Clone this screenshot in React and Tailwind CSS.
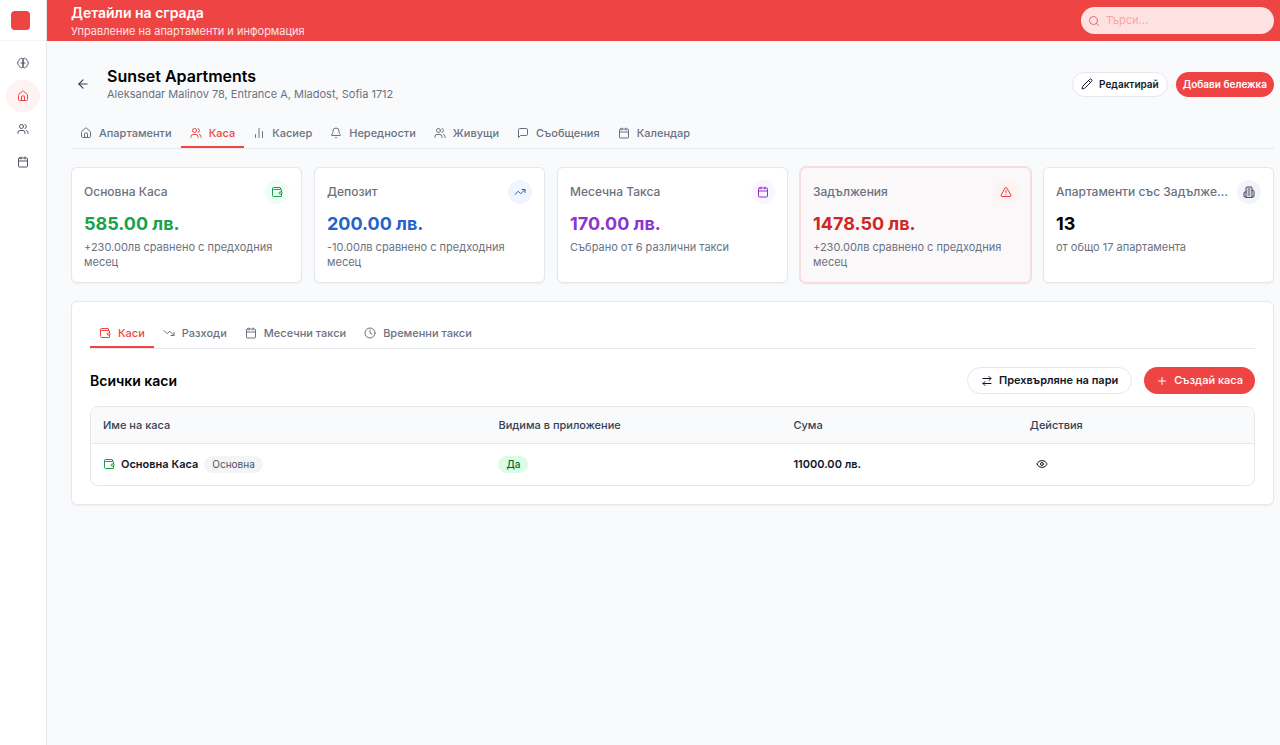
import { useState } from 'react';
import {
  ArrowLeft,
  ArrowRightLeft,
  Bell,
  Calendar,
  ChartNoAxesColumn,
  Clock,
  Eye,
  House,
  Pencil,
  Plus,
  Search,
  TrendingDown,
  TrendingUp,
  TriangleAlert,
  Users,
  Wallet,
} from 'lucide-react';

const LineIcon = ({ className, children }) => (
  <svg viewBox="0 0 24 24" fill="none" stroke="currentColor" strokeWidth="2" strokeLinecap="round" strokeLinejoin="round" className={className} aria-hidden="true">
    {children}
  </svg>
);

const Brain = ({ className }) => (
  <LineIcon className={className}>
    <path d="M12 4.5A2.8 2.8 0 0 0 7 3.4C4.800 4 3.600 5.600 3.700 7.500A5.500 5.500 0 0 0 1.500 12a5.500 5.500 0 0 0 2.200 4.500c-.1 1.900 1.100 3.500 3.300 4.100a2.800 2.800 0 0 0 5-1.100Z" />
    <path d="M12 4.500a2.800 2.800 0 0 1 5-1.100c2.200.6 3.400 2.200 3.300 4.100A5.500 5.500 0 0 1 22.500 12a5.500 5.500 0 0 1-2.200 4.500c.1 1.900-1.100 3.500-3.300 4.100a2.800 2.800 0 0 1-5-1.100Z" />
    <path d="M8 12h8" />
  </LineIcon>
);

const Message = ({ className }) => (
  <LineIcon className={className}>
    <path d="M21 15a2 2 0 0 1-2 2H7l-4 4V5a2 2 0 0 1 2-2h14a2 2 0 0 1 2 2z" />
  </LineIcon>
);

const Building = ({ className }) => (
  <LineIcon className={className}>
    <path d="M6 22V4a2 2 0 0 1 2-2h8a2 2 0 0 1 2 2v18Z" />
    <path d="M6 12H4a2 2 0 0 0-2 2v6a2 2 0 0 0 2 2h2" />
    <path d="M18 9h2a2 2 0 0 1 2 2v9a2 2 0 0 1-2 2h-2" />
    <path d="M10 6h4M10 10h4M10 14h4M10 18h4" />
  </LineIcon>
);

const navItems = [
  { icon: Brain, label: 'Асистент' },
  { icon: House, label: 'Сгради', active: true },
  { icon: Users, label: 'Потребители' },
  { icon: Calendar, label: 'Календар' },
];

const mainTabs = [
  { icon: House, label: 'Апартаменти' },
  { icon: Users, label: 'Каса' },
  { icon: ChartNoAxesColumn, label: 'Касиер' },
  { icon: Bell, label: 'Нередности' },
  { icon: Users, label: 'Живущи' },
  { icon: Message, label: 'Съобщения' },
  { icon: Calendar, label: 'Календар' },
];

const cashTabs = [
  { icon: Wallet, label: 'Каси' },
  { icon: TrendingDown, label: 'Разходи' },
  { icon: Calendar, label: 'Месечни такси' },
  { icon: Clock, label: 'Временни такси' },
];

const stats = [
  { title: 'Основна Каса', value: '585.00 лв.', note: '+230.00лв сравнено с предходния месец', icon: Wallet, valueColor: 'text-[#16a34a]', iconColor: 'text-[#16a34a] bg-green-50' },
  { title: 'Депозит', value: '200.00 лв.', note: '-10.00лв сравнено с предходния месец', icon: TrendingUp, valueColor: 'text-[#2563cb]', iconColor: 'text-[#2563cb] bg-blue-50' },
  { title: 'Месечна Такса', value: '170.00 лв.', note: 'Събрано от 6 различни такси', icon: Calendar, valueColor: 'text-[#8b35cf]', iconColor: 'text-[#8b35cf] bg-purple-50' },
  { title: 'Задължения', value: '1478.50 лв.', note: '+230.00лв сравнено с предходния месец', icon: TriangleAlert, valueColor: 'text-[#d02626]', iconColor: 'text-[#dc4040] bg-red-50', warning: true },
  { title: 'Апартаменти със Задължения', value: '13', note: 'от общо 17 апартамента', icon: Building, valueColor: 'text-black', iconColor: 'text-gray-700 bg-[#f3f3fa]' },
];

const Tabs = ({ items, initial }) => {
  const [active, setActive] = useState(initial);
  return (
    <div role="tablist" className="flex border-b border-gray-200">
      {items.map(({ icon: Icon, label }) => (
        <button
          key={label}
          role="tab"
          aria-selected={active === label}
          onClick={() => setActive(label)}
          className={`flex h-7 items-center gap-[7px] border-b-2 px-[9px] text-[11px] font-medium whitespace-nowrap ${
            active === label ? 'border-[#ef4444] text-[#ef4444]' : 'border-transparent text-gray-500'
          }`}
        >
          <Icon className="size-3 shrink-0" />
          {label}
        </button>
      ))}
    </div>
  );
};

const StatCard = ({ title, value, note, icon: Icon, valueColor, iconColor, warning }) => (
  <div className={`min-w-0 rounded-md border p-3 shadow-xs ${warning ? 'border-[#f8dcdf] bg-[#faf8f9] ring-1 ring-[#f8dcdf]' : 'border-gray-200 bg-white'}`}>
    <div className="flex items-center justify-between gap-1">
      <h3 className="truncate text-[12px] font-medium text-gray-500">{title}</h3>
      <span className={`flex size-6 shrink-0 items-center justify-center rounded-full ${iconColor}`}>
        <Icon className="size-3" />
      </span>
    </div>
    <p className={`mt-2 text-[18px] leading-6 font-bold ${valueColor}`}>{value}</p>
    <p className="mt-1 text-[11px] leading-[15px] text-gray-500">{note}</p>
  </div>
);

const App = () => (
  <div className="flex min-h-screen bg-[#f9fafc] font-['Inter','Noto_Sans',sans-serif] text-gray-900">
    <aside className="w-[47px] shrink-0 border-r border-gray-200 bg-white">
      <div className="flex h-[41px] items-center border-b border-gray-100 pl-[11px]">
        <span className="size-[19px] rounded bg-[#ef4444]" />
      </div>
      <nav className="flex flex-col items-center gap-px pt-1.5">
        {navItems.map(({ icon: Icon, label, active }) => (
          <a
            key={label}
            href="#"
            aria-label={label}
            className={`flex h-8 w-[34px] items-center justify-center rounded-full ${active ? 'bg-red-50 text-[#ef4444]' : 'text-gray-600'}`}
          >
            <Icon className="size-3" />
          </a>
        ))}
      </nav>
    </aside>

    <div className="min-w-0 flex-1">
      <header className="flex h-[41px] items-center justify-between bg-[#ef4444] pr-1.5 pl-6 text-white">
        <div>
          <h1 className="text-[14px] leading-5 font-semibold">Детайли на сграда</h1>
          <p className="text-[11px] leading-4 text-red-100">Управление на апартаменти и информация</p>
        </div>
        <label className="flex h-[27px] w-[193px] items-center gap-1.5 rounded-full bg-[#fee2e2] px-[7px]">
          <Search className="size-3 shrink-0 text-[#dc6b6b]" />
          <input type="search" aria-label="Търсене" placeholder="Търси..." className="min-w-0 flex-1 bg-transparent text-[11px] text-red-900 outline-none placeholder:text-[#fca5a5]" />
        </label>
      </header>

      <main className="pt-[25px] pr-1.5 pl-6">
        <div className="flex items-center justify-between">
          <div className="flex items-center">
            <button aria-label="Назад" className="flex size-6 items-center justify-center text-gray-700">
              <ArrowLeft className="size-3.5" />
            </button>
            <div className="ml-3">
              <h2 className="text-[16px] leading-5 font-semibold text-black">Sunset Apartments</h2>
              <p className="text-[11px] leading-4 text-gray-500">Aleksandar Malinov 78, Entrance A, Mladost, Sofia 1712</p>
            </div>
          </div>
          <div className="flex gap-2">
            <button className="flex h-[25px] items-center gap-1.5 rounded-full border border-gray-200 bg-white px-2 text-[10px] font-semibold">
              <Pencil className="size-3" />
              Редактирай
            </button>
            <button className="h-[25px] rounded-full bg-[#ef4444] px-[7px] text-[10px] font-semibold text-white">Добави бележка</button>
          </div>
        </div>

        <div className="mt-[18px]">
          <Tabs items={mainTabs} initial="Каса" />
        </div>

        <div className="mt-[18px] grid grid-cols-5 gap-3">
          {stats.map((s) => (
            <StatCard key={s.title} {...s} />
          ))}
        </div>

        <section className="mt-[18px] rounded-md border border-gray-200 bg-white p-[18px] shadow-xs">
          <Tabs items={cashTabs} initial="Каси" />

          <div className="mt-[18px] flex items-center justify-between">
            <h2 className="text-[14px] font-semibold text-black">Всички каси</h2>
            <div className="flex gap-3">
              <button className="flex h-[27px] items-center gap-1.5 rounded-full border border-gray-200 bg-white px-[13px] text-[11px] font-semibold">
                <ArrowRightLeft className="size-3" />
                Прехвърляне на пари
              </button>
              <button className="flex h-[27px] items-center gap-1.5 rounded-full bg-[#ef4444] px-3 text-[11px] font-medium text-white">
                <Plus className="size-3" />
                Създай каса
              </button>
            </div>
          </div>

          <div className="mt-3 overflow-hidden rounded-lg border border-gray-200">
            <table className="w-full table-fixed text-left text-[11px]">
              <thead className="border-b border-gray-200 bg-[#f9fafc] text-gray-700">
                <tr className="h-9">
                  <th className="w-[34%] px-3 font-medium">Име на каса</th>
                  <th className="w-[295px] px-3 font-medium">Видима в приложение</th>
                  <th className="px-3 font-medium">Сума</th>
                  <th className="px-3 font-medium">Действия</th>
                </tr>
              </thead>
              <tbody>
                <tr className="h-[42px]">
                  <td className="px-3">
                    <div className="flex items-center gap-1.5">
                      <Wallet className="size-3 text-[#16a34a]" />
                      <span className="font-semibold">Основна Каса</span>
                      <span className="rounded-full bg-gray-100 px-2 text-[10px] leading-[17px] text-gray-600">Основна</span>
                    </div>
                  </td>
                  <td className="px-3">
                    <span className="inline-block rounded-full bg-green-100 px-2 text-[10px] leading-[17px] font-medium text-green-800">Да</span>
                  </td>
                  <td className="px-3 font-semibold">11000.00 лв.</td>
                  <td className="px-3">
                    <button aria-label="Преглед" className="flex size-6 items-center justify-center">
                      <Eye className="size-3" />
                    </button>
                  </td>
                </tr>
              </tbody>
            </table>
          </div>
        </section>
      </main>
    </div>
  </div>
);

export default App;
